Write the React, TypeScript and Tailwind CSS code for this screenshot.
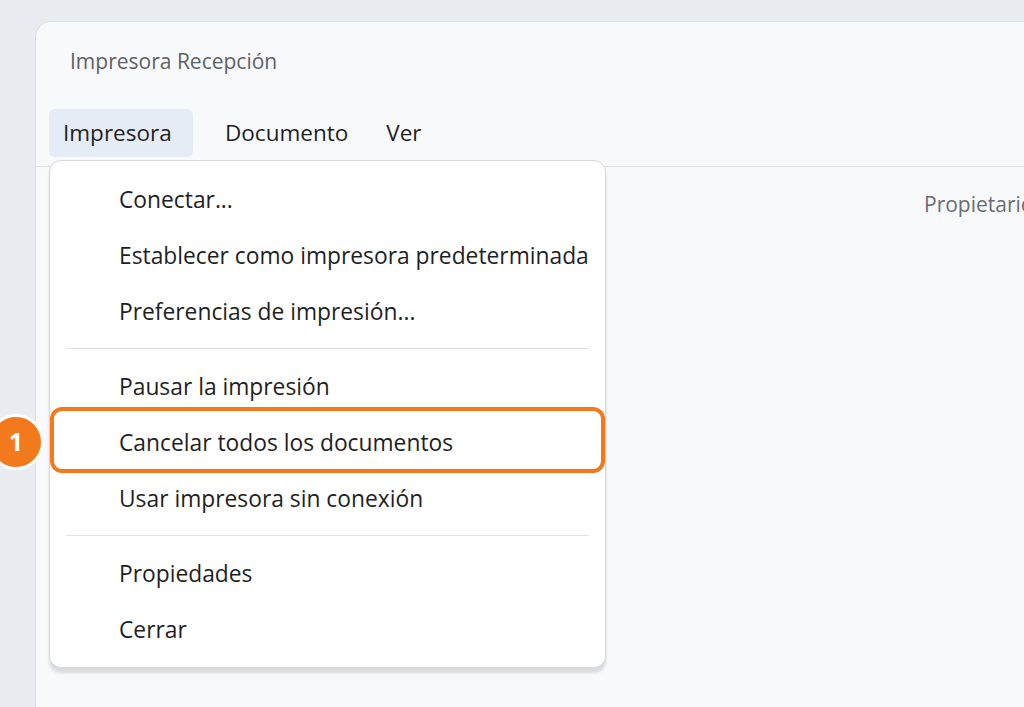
import React from "react";

const font = { fontFamily: '"Open Sans", "Noto Sans", sans-serif' };

function Item({ label }: { label: string }) {
  return (
    <div className="h-[56px] flex items-center pl-[69px] pt-[2px] text-[22.8px] text-[#1f1f1f]">
      {label}
    </div>
  );
}

function Sep() {
  return (
    <div className="h-[19px] flex items-center px-[16px]">
      <div className="h-px w-full bg-[#e2e2e4]" />
    </div>
  );
}

export default function App() {
  return (
    <div
      className="w-[1024px] h-[707px] bg-[#e9ecf0] overflow-hidden relative pt-[21px] pl-[35px]"
      style={font}
    >
      <div className="h-[700px] bg-[#f8f9fb] rounded-tl-[16px] border-l border-t border-[#dcdee2] flex flex-col">
        <div className="h-[64px] pl-[34px] pt-[29px] text-[21px] text-[#5e6166] leading-none">
          Impresora Recepción
        </div>
        <div className="flex items-center h-[81px] border-b border-[#dfe0e3] pl-[13px] pb-[10px] pt-[23px]">
          <div className="h-[48px] w-[144px] rounded-[6px] bg-[#e5ecf6] flex items-center pl-[14px] text-[22.5px] text-[#1f1f1f]">
            Impresora
          </div>
          <div className="ml-[32px] text-[22.5px] text-[#1f1f1f]">Documento</div>
          <div className="ml-[38px] text-[22.5px] text-[#1f1f1f]">Ver</div>
        </div>
        <div className="flex pt-[22px] pl-[888px]">
          <div className="text-[21px] text-[#6a6d72] whitespace-nowrap">Propietario</div>
        </div>
      </div>

      <div className="absolute left-[49px] top-[160px] w-[557px] h-[508px] bg-white rounded-[12px] border border-[#d6d7da] shadow-[0_5px_3px_rgba(0,0,0,0.12)] py-[10px]">
        <Item label="Conectar..." />
        <Item label="Establecer como impresora predeterminada" />
        <Item label="Preferencias de impresión..." />
        <Sep />
        <Item label="Pausar la impresión" />
        <Item label="Cancelar todos los documentos" />
        <Item label="Usar impresora sin conexión" />
        <Sep />
        <Item label="Propiedades" />
        <Item label="Cerrar" />
      </div>

      <div className="absolute left-[50px] top-[407px] w-[555px] h-[66px] rounded-[12px] border-[4px] border-[#f27a1c]" />

      <div className="absolute left-[-12px] top-[414px] w-[56px] h-[56px] rounded-full bg-[#f27a1c] border-[3px] border-white flex items-center justify-center text-white text-[25px] font-bold">
        1
      </div>
    </div>
  );
}
